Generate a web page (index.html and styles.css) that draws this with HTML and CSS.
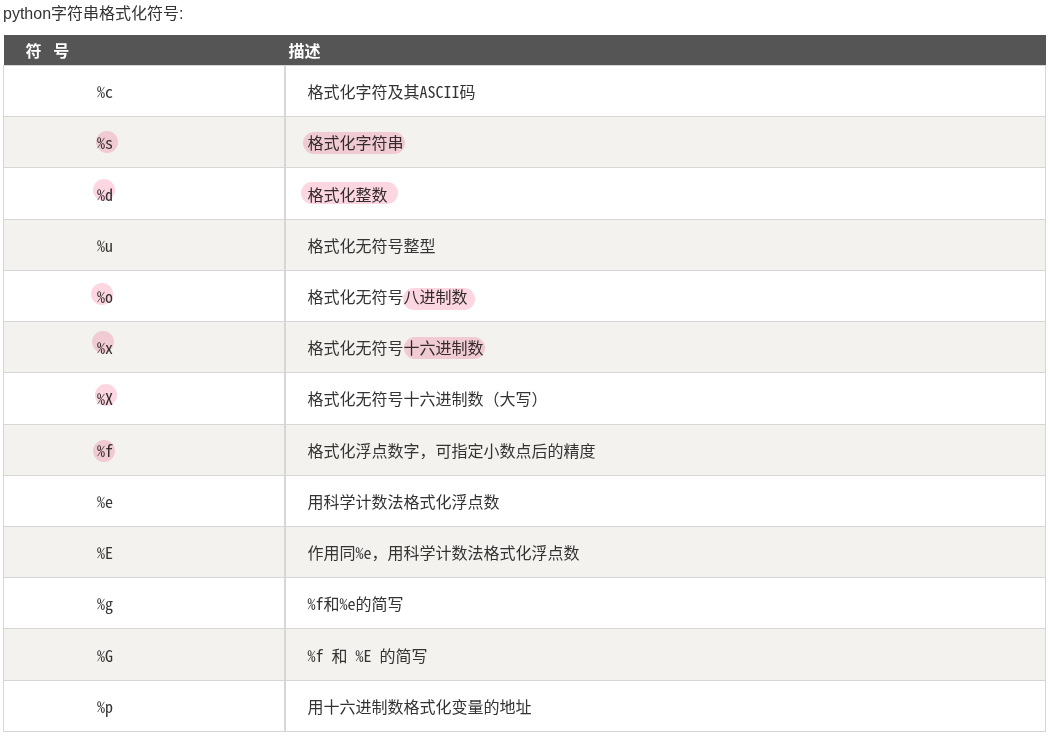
FILE: index.html
```html
<!DOCTYPE html>
<html lang="zh-CN">
<head>
<meta charset="utf-8">
<title>python字符串格式化符号</title>
<link rel="stylesheet" href="styles.css">
</head>
<body>
<div class="page">
  <p class="title">python字符串格式化符号:</p>
  <table class="fmt">
    <thead>
      <tr><th class="c1">符 号</th><th class="c2">描述</th></tr>
    </thead>
    <tbody>
      <tr><td class="code">%c</td><td class="desc">格式化字符及其ASCII码</td></tr>
      <tr><td class="code"><span class="dot dot-s">%s</span></td><td class="desc"><span class="pill pill-s">格式化字符串</span></td></tr>
      <tr><td class="code"><span class="dot dot-d">%d</span></td><td class="desc"><span class="pill pill-d">格式化整数</span></td></tr>
      <tr><td class="code">%u</td><td class="desc">格式化无符号整型</td></tr>
      <tr><td class="code"><span class="dot dot-o">%o</span></td><td class="desc">格式化无符号<span class="pill pill-o">八进制数</span></td></tr>
      <tr><td class="code"><span class="dot dot-x">%x</span></td><td class="desc">格式化无符号<span class="pill pill-x">十六进制数</span></td></tr>
      <tr><td class="code"><span class="dot dot-X">%X</span></td><td class="desc">格式化无符号十六进制数（大写）</td></tr>
      <tr><td class="code"><span class="dot dot-f">%f</span></td><td class="desc">格式化浮点数字，可指定小数点后的精度</td></tr>
      <tr><td class="code">%e</td><td class="desc">用科学计数法格式化浮点数</td></tr>
      <tr><td class="code">%E</td><td class="desc">作用同%e，用科学计数法格式化浮点数</td></tr>
      <tr><td class="code">%g</td><td class="desc">%f和%e的简写</td></tr>
      <tr><td class="code">%G</td><td class="desc">%f 和 %E 的简写</td></tr>
      <tr><td class="code">%p</td><td class="desc">用十六进制数格式化变量的地址</td></tr>
    </tbody>
  </table>
</div>
</body>
</html>
```
FILE: styles.css
```css
html, body {
  margin: 0;
  padding: 0;
  background: #ffffff;
}
.page {
  padding: 0 4px 0 3px;
}
.title {
  margin: 0;
  padding-top: 4px;
  height: 31px;
  line-height: 20px;
  font-family: "Liberation Sans", "Noto Sans CJK SC", sans-serif;
  font-size: 16px;
  color: #333333;
}
.fmt {
  width: 100%;
  border-collapse: collapse;
  font-family: "Noto Sans Mono CJK SC", "Liberation Mono", "Noto Sans CJK SC", monospace;
  font-size: 16px;
  color: #333333;
}
.fmt th {
  background: #555555;
  color: #ffffff;
  font-family: "Noto Sans CJK SC", sans-serif;
  font-weight: bold;
  font-size: 16px;
  text-align: left;
  height: 30px;
  padding: 0;
  line-height: 30px;
}
.fmt th.c1 {
  width: 259px;
  padding-left: 22px;
  word-spacing: 8px;
}
.fmt th.c2 {
  padding-left: 4px;
}
.fmt tbody tr {
  height: 51.23px;
}
.fmt td {
  border: 1px solid #d6d6d6;
  padding: 0;
  line-height: 20px;
}
.fmt tbody tr:nth-child(even) td {
  background: #f3f2ef;
}
.fmt td.code {
  padding-left: 93px;
  border-right: 2px solid #d6d6d6;
}
.fmt td.desc {
  padding-left: 22px;
}
.dot, .pill {
  position: relative;
}
.dot::before, .pill::before {
  content: "";
  position: absolute;
  top: 50%;
  background: #fcd6e1;
  mix-blend-mode: multiply;
}
.dot::before {
  width: 22px;
  height: 22px;
  border-radius: 50%;
  left: var(--dx);
  margin-top: calc(-11px + var(--dy));
}
.pill::before {
  height: 22px;
  border-radius: 11px;
  left: var(--pl);
  right: var(--pr);
  margin-top: calc(-11px + var(--dy));
}
.dot-s { --dx: -1px; --dy: 0px; }
.dot-d { --dx: -4px; --dy: -4px; }
.dot-o { --dx: -6px; --dy: -2px; }
.dot-x { --dx: -5px; --dy: -5px; }
.dot-X { --dx: -2px; --dy: -3px; }
.dot-f { --dx: -4px; --dy: 1px; }
.pill-s { --pl: -5px; --pr: -1px; --dy: 1px; }
.pill-d { --pl: -7px; --pr: -10px; --dy: -1px; }
.pill-o { --pl: -1px; --pr: -7px; --dy: 3px; }
.pill-x { --pl: 0px; --pr: -1px; --dy: 1px; }
```
